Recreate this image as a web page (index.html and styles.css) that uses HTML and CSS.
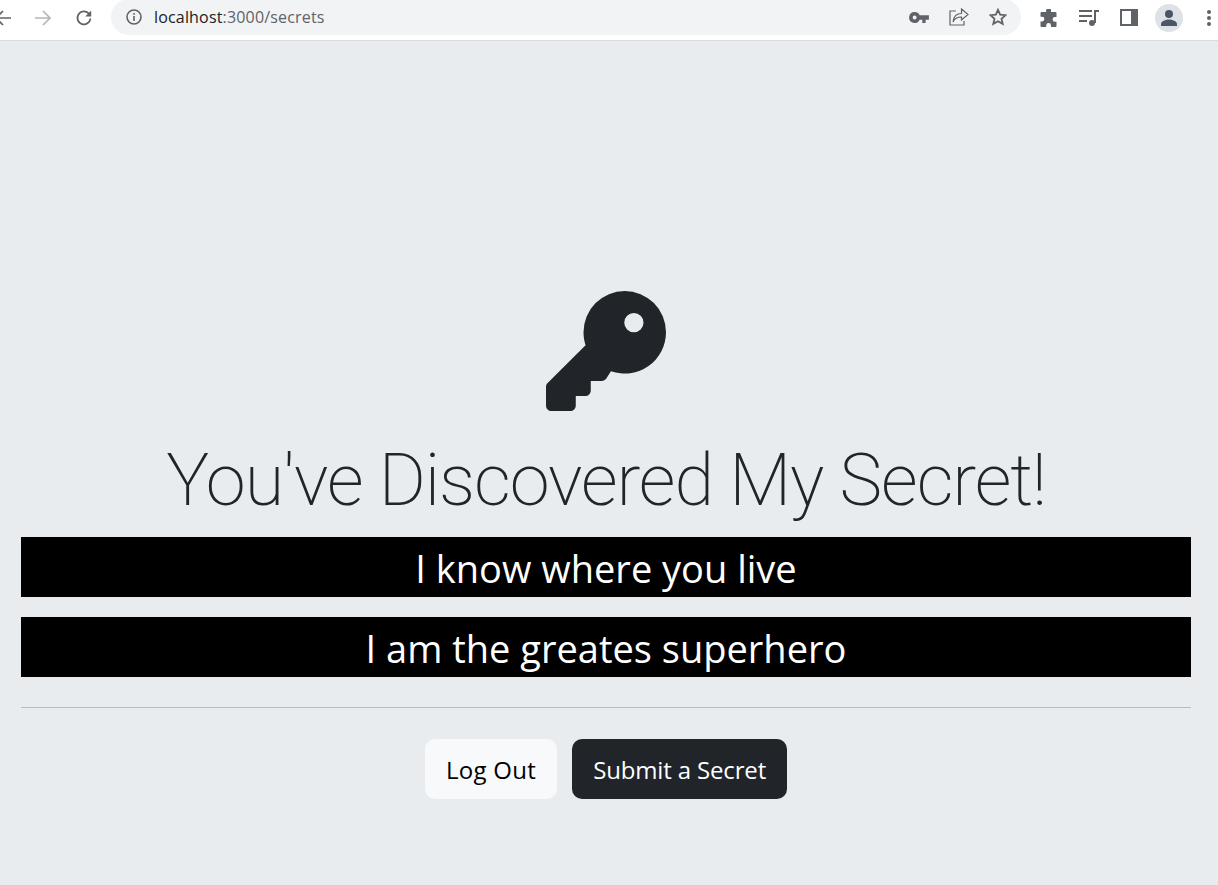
FILE: index.html
```html
<!DOCTYPE html>
<html lang="en">
<head>
  <meta charset="UTF-8">
  <meta name="viewport" content="width=device-width, initial-scale=1.0">
  <title>Secrets</title>
  <link rel="stylesheet" href="styles.css">
</head>
<body>
  <div class="toolbar">
    <div class="nav-btns">
      <svg class="icon" width="18" height="18" viewBox="0 0 18 18" fill="none" stroke="#5f6368" stroke-width="1.7"><path d="M8 2L1 9l7 7M1 9h15"/></svg>
      <svg class="icon" width="18" height="18" viewBox="0 0 18 18" fill="none" stroke="#b4b6b9" stroke-width="1.7"><path d="M8 2l7 7-7 7M15 9H0"/></svg>
      <svg class="icon" width="18" height="18" viewBox="0 0 18 18" fill="none" stroke="#5f6368" stroke-width="1.8"><path d="M15.4 9.5A6.5 6.5 0 1 1 13.6 4.4L15.5 6.5"/><path d="M16.2 1.5v6h-6" fill="#5f6368" stroke="none"/></svg>
    </div>
    <div class="address">
      <svg width="16" height="16" viewBox="0 0 16 16" fill="none" stroke="#5f6368" stroke-width="1.6"><circle cx="8" cy="8" r="7"/><path d="M8 7v5M8 4v1.8"/></svg>
      <span class="url"><span class="host">localhost</span>:3000/secrets</span>
      <div class="address-icons">
        <svg width="20" height="11" viewBox="0 0 18 10" fill="#5f6368"><path d="M5 0a5 5 0 1 0 4.6 7H12v3h3V7h3V3H9.600A5 5 0 0 0 5 0zm0 3.200a1.800 1.800 0 1 1 0 3.600 1.800 1.800 0 0 1 0-3.600z"/></svg>
        <svg width="20" height="18" viewBox="0 0 20 18" fill="none" stroke="#5f6368" stroke-width="1.2"><path d="M12.500 1l6.500 5.500-6.500 5.500V9C8 9 5.500 10.500 4 14c.5-5 3.500-8.500 8.500-8.500z"/><path d="M7 3H1v14h14v-4"/></svg>
        <svg width="18" height="18" viewBox="0 0 18 18" fill="none" stroke="#5f6368" stroke-width="1.800"><path d="M9 1.800l2.200 4.900 5.300.5-4 3.500 1.200 5.200L9 13.200l-4.700 2.700 1.200-5.200-4-3.500 5.300-.5z"/></svg>
      </div>
    </div>
    <div class="browser-icons">
      <svg width="19" height="18" viewBox="0 0 18 18" fill="#5f6368"><path d="M7 0.500a2.300 2.300 0 0 1 4.500 0.500V3H16a1 1 0 0 1 1 1v4h-1.500a2.400 2.400 0 0 0 0 4.800H17V17a1 1 0 0 1-1 1h-4.500v-1.500a2.400 2.400 0 0 0-4.800 0V18H2a1 1 0 0 1-1-1v-4.500h1.500a2.400 2.400 0 0 0 0-4.800H1V4a1 1 0 0 1 1-1h4.600V1z"/></svg>
      <svg width="20" height="17" viewBox="0 0 20 17" fill="none" stroke="#5f6368" stroke-width="2"><path d="M0 2h13M0 7h13M0 12h8"/><path d="M16 14V2h4"/><circle cx="13" cy="14" r="3" fill="#5f6368" stroke="none"/></svg>
      <svg width="18" height="17" viewBox="0 0 18 17" fill="#5f6368"><path d="M0 0h18v17H0zM2 2v13h9V2z" fill-rule="evenodd"/></svg>
      <div class="avatar">
        <svg width="18" height="18" viewBox="0 0 18 18" fill="#4a5568"><circle cx="9" cy="5" r="4"/><path d="M1 17v-2c0-3 5-4.500 8-4.500s8 1.500 8 4.500v2z"/></svg>
      </div>
      <svg class="dots" width="4" height="16" viewBox="0 0 4 16" fill="#5f6368"><circle cx="2" cy="2" r="2"/><circle cx="2" cy="8" r="2"/><circle cx="2" cy="14" r="2"/></svg>
    </div>
  </div>

  <div class="page">
    <svg class="key" width="120" height="120" viewBox="0 0 512 512" fill="#212529" fill-rule="evenodd"><path d="M512 176A176 176 0 0 1 277 342L256 375Q248 384 237 384H191v40c0 13.255-10.745 24-24 24h-40v40c0 13.255-10.745 24-24 24H24c-13.255 0-24-10.745-24-24v-78.059c0-6.365 2.529-12.470 7.029-16.971l161.802-161.802C163.108 213.814 160 195.271 160 176A176 176 0 0 1 512 176zM334 135a41 41 0 1 0 82 0a41 41 0 1 0-82 0z"/></svg>
    <h1 class="title">You've Discovered My Secret!</h1>
    <p class="secret">I know where you live</p>
    <p class="secret">I am the greates superhero</p>
    <hr class="divider">
    <div class="actions">
      <a class="btn btn-light" href="#">Log Out</a>
      <a class="btn btn-dark" href="#">Submit a Secret</a>
    </div>
  </div>
</body>
</html>
```

FILE: styles.css
```css
* {
  box-sizing: border-box;
}
html,
body {
  height: 100%;
}
body {
  margin: 0;
  background: #e9ecef;
  color: #212529;
  font-family: "Open Sans", "Noto Sans", sans-serif;
  overflow: hidden;
}

.toolbar {
  display: flex;
  align-items: center;
  height: 41px;
  padding-bottom: 5px;
  background: #fff;
  border-bottom: 1px solid #dadce0;
}
.nav-btns {
  display: flex;
  align-items: center;
  gap: 22px;
  margin-left: -5px;
}
.address {
  display: flex;
  align-items: center;
  width: 910px;
  height: 36px;
  margin-left: 18px;
  margin-top: -1px;
  padding: 0 14px 0 15px;
  background: #f1f3f4;
  border-radius: 18px;
}
.url {
  margin-left: 12px;
  font-size: 16px;
  letter-spacing: 0.17px;
  color: #5f6368;
}
.host {
  color: #202124;
}
.address-icons {
  display: flex;
  align-items: center;
  gap: 20px;
  margin-left: auto;
}
.browser-icons {
  display: flex;
  align-items: center;
  gap: 21px;
  margin-left: 18px;
}
.avatar {
  display: flex;
  align-items: center;
  justify-content: center;
  width: 28px;
  height: 28px;
  margin: 0 3px 0 -4px;
  border-radius: 50%;
  background: #dee1e6;
}

.page {
  display: flex;
  flex-direction: column;
  align-items: center;
  width: 1212px;
  padding: 250px 21px 0;
}
.key {
  display: block;
}
.title {
  margin: 27px 0 13px;
  font-family: Roboto, "Open Sans", sans-serif;
  font-size: 72px;
  line-height: 1.2;
  font-weight: 200;
  letter-spacing: -1.1px;
}
.secret {
  width: 100%;
  height: 60px;
  margin: 0 0 20px;
  background: #000;
  color: #fff;
  font-size: 38px;
  line-height: 62px;
  text-align: center;
}
.divider {
  width: 100%;
  margin: 10px 0 31px;
  border: 0;
  border-top: 1px solid #b9bcbf;
}
.actions {
  display: flex;
  gap: 15px;
}
.btn {
  display: block;
  height: 60px;
  padding: 0 21px;
  border-radius: 10px;
  font-size: 24px;
  line-height: 61px;
  text-decoration: none;
}
.btn-light {
  background: #f8f9fa;
  color: #000;
  letter-spacing: 0.3px;
}
.btn-dark {
  background: #212529;
  color: #fff;
  letter-spacing: -0.15px;
}
```
